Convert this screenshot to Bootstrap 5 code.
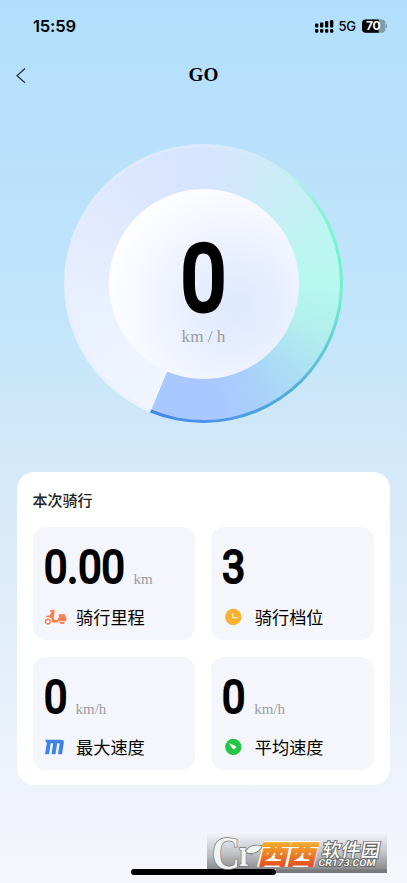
<!DOCTYPE html>
<html lang="zh-CN">
<head>
<meta charset="utf-8">
<meta name="viewport" content="width=device-width, initial-scale=1">
<title>GO</title>
<link href="https://cdn.jsdelivr.net/npm/bootstrap@5.3.0/dist/css/bootstrap.min.css" rel="stylesheet">
<style>
body{background:#f4f6fc;color:#000;font-family:"Noto Sans CJK SC",sans-serif}
.screen{height:883px;width:100%;max-width:407px;background:linear-gradient(#b1dffb 0,#bae1fb 16%,#c1e4fa 34%,#d1e8f9 50%,#d8eaf9 58%,#e6f0fa 77%,#f0f3fc 91%,#f5f7fd 100%)}
.status{height:52px;padding:0 20px 0 33px;font-family:Inter,sans-serif}
.clock{font-size:16.6px;font-weight:600;line-height:20px;letter-spacing:-.2px}
.title-bar{height:46px;padding:0 15px}
.title-bar h1{font:bold 19.2px/22px "Liberation Serif",serif}
.title-bar>*{width:24px}
.title-bar>h1{width:auto}
.gauge{width:279px;height:279px;margin:46px auto 0;padding:3.2px;border-radius:50%;
 background:conic-gradient(#dceafd 0deg,#d0eaf8 28deg,#b8efec 43deg,#84f3d5 58deg,#6cf5cc 80deg,#70efd0 95deg,#66d3d2 113deg,#53b3d6 135deg,#4b9ee6 160deg,#4b93ee 180deg,#4384e8 202.4deg,#ebf2fe 202.7deg,#e5edfe 280deg,#dceafd 360deg)}
.ring{border-radius:50%;
 background:conic-gradient(#d6e4ff 0deg,#d0e9fa 22deg,#c8edf6 45deg,#bdf5f1 68deg,#b8f8ee 90deg,#b2efee 112deg,#acdff4 134deg,#a9d0fb 154deg,#a9c8ff 175deg,#a8c8ff 202.3deg,#f0f5ff 202.6deg,#e9f0ff 260deg,#e0e9ff 305deg,#d6e4ff 360deg)}
.dial{width:190px;height:190px;border-radius:50%;background:radial-gradient(circle at 67% 62%,#dee9ff 0,#e7eeff 25%,#f2f5ff 47%,#fff 78%)}
.digits{font-family:Roboto,sans-serif;font-weight:400;transform-origin:0 50%;white-space:nowrap}
.speed{width:41px;height:72px;font-size:91px;line-height:72px;margin-top:54px}
.speed span{display:block;transform:scaleX(.88);transform-origin:0 50%;margin-left:-2px;-webkit-text-stroke:5px #000}
.unit{font-family:"Liberation Serif",serif;font-size:15px;line-height:16px;color:#999ba2}
.speed-unit{font-size:17.2px;line-height:20px;margin-top:12.5px}
.ride{margin:49px 17px 0 16.5px;padding:16px;border-radius:17px;height:313px}
.ride h2{font-size:15px;line-height:24px;font-weight:500;color:#222;margin:0 0 15px}
.tiles{display:grid;grid-template-columns:1fr 1fr;gap:16.5px 16px}
.tile{height:113px;border-radius:13px;background:#f4f6fb;padding:20px 11px 0}
.figure{height:40px;font-size:46px;line-height:40px}
.figure .digits{display:block;transform:scaleX(.9);margin-left:0;-webkit-text-stroke:2.2px #000}
.d1{width:22px}.d4{width:80px}
.figure .unit{margin:24px 0 0 10px}
.label{margin-top:17px;font-size:17.2px;line-height:26px}
.label svg{width:24px;height:20px;margin-right:8.5px}
.bottom-mark{right:20px;top:833px}
.home-bar{left:131px;top:869px;width:145px;height:5.5px;border-radius:3px;background:#000}
</style>
<script src="https://cdn.jsdelivr.net/npm/bootstrap@5.3.0/dist/js/bootstrap.bundle.min.js"></script>
</head>
<body>
<main class="screen position-relative overflow-hidden">
 <div class="status d-flex align-items-center justify-content-between">
  <span class="clock">15:59</span>
  <svg width="74" height="18" viewBox="313 17 74 18">
   <g><rect x="315" y="23.5" width="3.3" height="4" rx="1"/><rect x="320" y="22.5" width="3.3" height="5" rx="1"/><rect x="325" y="21" width="3.3" height="6.5" rx="1"/><rect x="330" y="20" width="3.3" height="7.5" rx="1"/>
   <rect x="315" y="29" width="3.3" height="3.7" rx="1.2"/><rect x="320" y="29" width="3.3" height="3.7" rx="1.2"/><rect x="325" y="29" width="3.3" height="3.7" rx="1.2"/><rect x="330" y="29" width="3.3" height="3.7" rx="1.2"/></g>
   <text x="338.5" y="31.3" font-size="13" textLength="17.5" font-family="Inter" font-weight="500">5G</text>
   <rect x="362" y="19.5" width="23.5" height="13.2" rx="4" fill="#7d9cae"/><path d="M366 19.5h12.7v13.2H366a4 4 0 0 1-4-4v-5.2a4 4 0 0 1 4-4z"/><path d="M386 24q1.6 0 1.6 2T386 28z" fill="#7d9cae"/>
   <text x="366" y="30.4" font-size="12" font-family="Inter" font-weight="700" fill="#fff" textLength="14.5">70</text>
  </svg>
 </div>
 <header class="title-bar d-flex align-items-center justify-content-between">
  <svg width="12" height="18" viewBox="0 0 24 18" fill="none" stroke="#222d36" stroke-width="1.2"><path d="M10 2.5 2 9.8l8 7"/></svg>
  <h1 class="m-0">GO</h1><span></span>
 </header>
 <section class="gauge">
  <div class="ring w-100 h-100 d-flex align-items-center justify-content-center">
   <div class="dial d-flex flex-column align-items-center">
    <div class="speed digits"><span>0</span></div>
    <div class="unit speed-unit">km / h</div>
   </div>
  </div>
 </section>
 <section class="ride bg-white">
  <h2>本次骑行</h2>
  <div class="tiles">
   <div class="tile">
    <div class="figure d-flex"><div class="d4"><span class="digits">0.00</span></div><span class="unit">km</span></div>
    <div class="label d-flex align-items-center"><svg viewBox="0 0 24 20"><circle cx="3.9" cy="14.6" r="2.4" fill="none" stroke="#fb8050" stroke-width="1.4"/><path d="M6.2 3h4.3v3.2l-.8 4.2 1.2 2.6h2.6q.3-2.4 2-3l-.8-1.3V7.2h6.6v1.7q1.4 1.6 1.2 4.2l-.6 1H8.2q-.6-3.7-4.3-4-1.6-.1-2.7.6.8-2 4.3-2.4L7.6 5H6.2z" fill="#fb8050"/><path d="M8 14h6.2v1.6H8zM15 14.8h6.2a3.2 3.2 0 0 1-6.2 0z" fill="#fb8050"/></svg>骑行里程</div>
   </div>
   <div class="tile">
    <div class="figure d-flex"><div class="d1"><span class="digits">3</span></div></div>
    <div class="label d-flex align-items-center"><svg viewBox="0 0 24 20"><circle cx="11.3" cy="10" r="8.2" fill="#f7b232"/><path d="M10.8 6.3v4.4h5" fill="none" stroke="#fff3c9" stroke-width="1.2"/></svg>骑行档位</div>
   </div>
   <div class="tile">
    <div class="figure d-flex"><div class="d1"><span class="digits">0</span></div><span class="unit">km/h</span></div>
    <div class="label d-flex align-items-center"><svg viewBox="0 0 24 20"><path d="M1 2.8h16q3.4 0 2.8 3.3L18 17.2h-4L15.7 6.3h-2.5l-1.7 10.9h-4L9.2 6.3H6.7L5 17.2H1L2.8 6.3z" fill="#3f82ec"/></svg>最大速度</div>
   </div>
   <div class="tile">
    <div class="figure d-flex"><div class="d1"><span class="digits">0</span></div><span class="unit">km/h</span></div>
    <div class="label d-flex align-items-center"><svg viewBox="0 0 24 20"><circle cx="11.3" cy="10" r="8.2" fill="#25c548"/><path d="m7 6.2 5.8 2.4a1.9 1.9 0 1 1-2.6 2.6z" fill="#eefff1"/></svg>平均速度</div>
   </div>
  </div>
 </section>
 <div class="home-bar position-absolute"></div>
 <svg class="bottom-mark position-absolute" width="180" height="40" viewBox="0 0 180 40">
  <defs><linearGradient id="fade" x2="0" y2="1"><stop stop-color="#777" stop-opacity="0"/><stop offset=".5" stop-color="#777" stop-opacity=".4"/><stop offset="1" stop-color="#666" stop-opacity=".85"/></linearGradient>
  <linearGradient id="warm" x2="0" y2="1"><stop offset=".2" stop-color="#f6b52e"/><stop offset=".9" stop-color="#e34b1e"/></linearGradient></defs>
  <path fill="url(#fade)" d="M0 0h180v36.3H69V40H180V36H0z"/><path fill="#777" fill-opacity=".8" d="M69 36h111v4H69z"/>
  <g font-family="Liberation Serif" font-weight="700" fill="#f2f3f3" stroke="#777" stroke-width="1.6" paint-order="stroke"><text x="5" y="35.5" font-size="46" textLength="28" lengthAdjust="spacingAndGlyphs">C</text><text x="32" y="32.5" font-size="38" textLength="13" lengthAdjust="spacingAndGlyphs">r</text><path d="M39 18q5-7 16-5-4 8-14 7z"/></g>
  <path d="M57 8h56l-6 26H50z" fill="#fff"/>
  <g transform="translate(51.5 30.5) skewX(-13) scale(1.06 .94)" font-family="Noto Sans CJK SC" font-weight="900" font-size="28" fill="url(#warm)" stroke="url(#warm)" stroke-width=".9"><text x="-1" y="0">西</text><text x="26" y="0">西</text></g>
  <g fill="#fff" stroke="#666" stroke-width="1.8" paint-order="stroke"><text transform="translate(114 24) skewX(-10)" font-family="Noto Sans CJK SC" font-weight="500" font-size="19" textLength="58">软件园</text><text transform="translate(111 33) skewX(-10)" font-family="Roboto" font-weight="500" font-size="9.5" textLength="57" lengthAdjust="spacingAndGlyphs">CR173.COM</text></g>
 </svg>
</main>
</body>
</html>
